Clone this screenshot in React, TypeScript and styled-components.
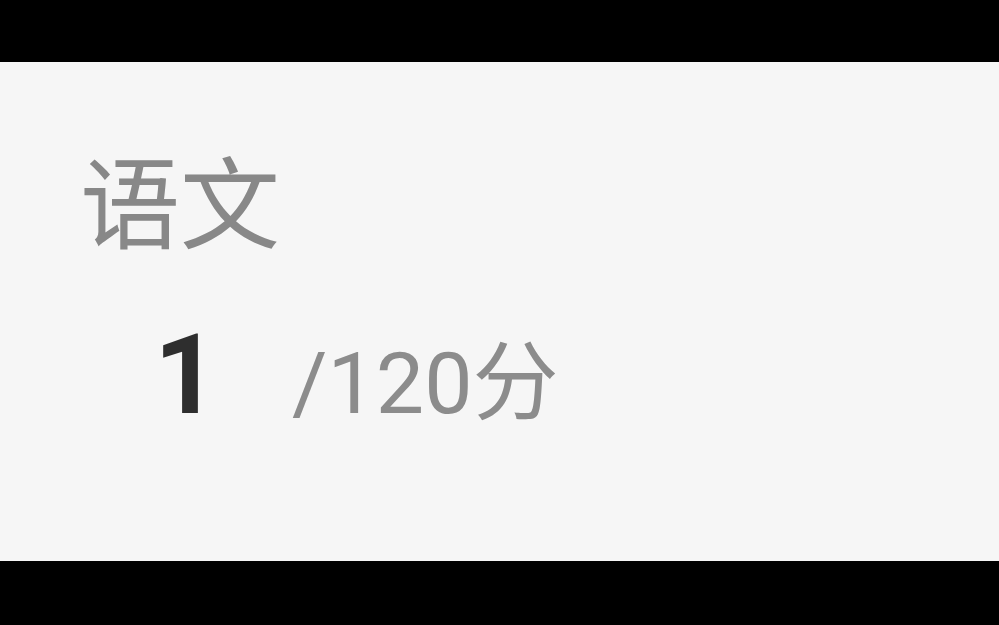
import styled, { createGlobalStyle } from "styled-components";

const GlobalStyle = createGlobalStyle`
  html, body {
    margin: 0;
    padding: 0;
    background: #000000;
  }
  #root {
    height: 625px;
  }
`;

const Screen = styled.div`
  height: 625px;
  display: flex;
  flex-direction: column;
  justify-content: flex-start;
  padding-top: 62px;
  box-sizing: border-box;
`;

const Card = styled.section`
  height: 499px;
  background: #f6f6f6;
  padding: 86px 0 0 80px;
  box-sizing: border-box;
  display: flex;
  flex-direction: column;
  font-family: "Noto Sans CJK SC", "Noto Sans", sans-serif;
`;

const Subject = styled.h2`
  margin: 0;
  font-size: 100px;
  line-height: 100px;
  font-weight: 400;
  color: #888888;
`;

const ScoreRow = styled.div`
  margin-top: 71px;
  display: flex;
  align-items: baseline;
`;

const ScoreInput = styled.span`
  width: 212px;
  padding-left: 74px;
  box-sizing: border-box;
  font-family: Roboto, "Liberation Sans", sans-serif;
  font-size: 112px;
  line-height: 1;
  font-weight: 700;
  color: #2e2e2e;
`;

const Total = styled.span`
  font-family: Roboto, "Noto Sans CJK SC", sans-serif;
  font-size: 86px;
  line-height: 1;
  color: #8c8c8c;
`;

const Unit = styled.span`
  font-family: "Noto Sans CJK SC", sans-serif;
`;

export default function App() {
  return (
    <>
      <GlobalStyle />
      <Screen>
        <Card>
          <Subject>语文</Subject>
          <ScoreRow>
            <ScoreInput>1</ScoreInput>
            <Total>
              /120<Unit>分</Unit>
            </Total>
          </ScoreRow>
        </Card>
      </Screen>
    </>
  );
}
